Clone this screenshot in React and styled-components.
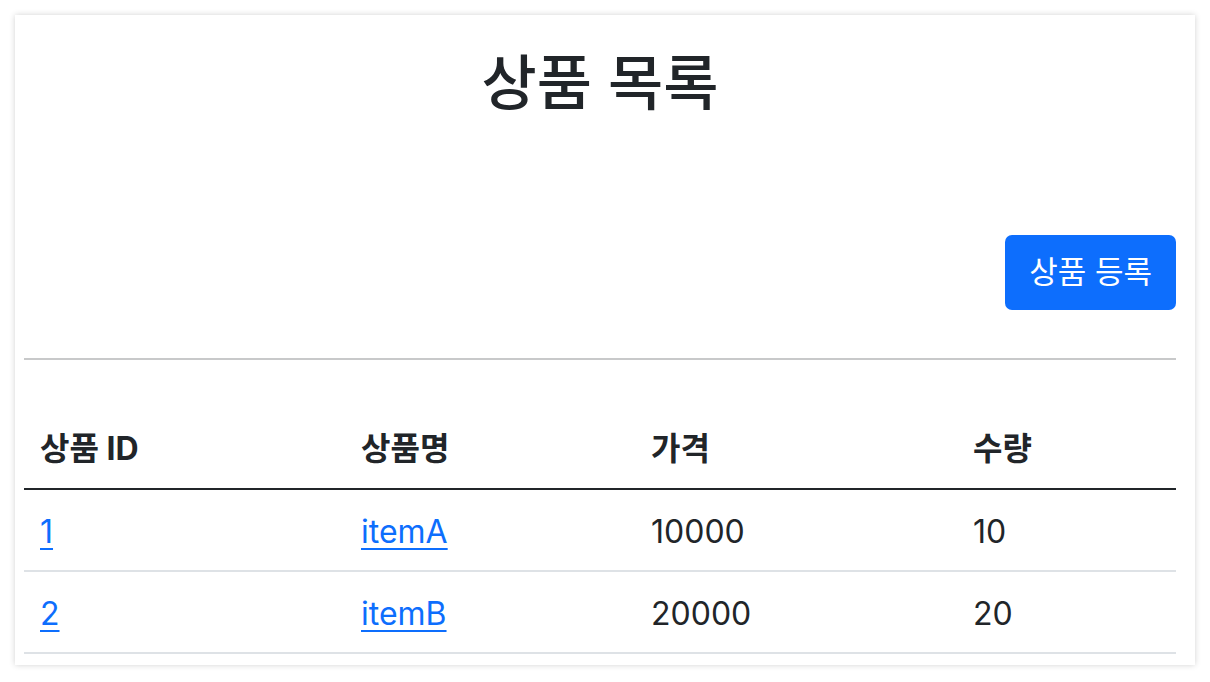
import React from 'react';
import styled, {createGlobalStyle} from "styled-components";

const GlobalStyle = createGlobalStyle`
  html, body {
    margin: 0;
    padding: 0;
    background: #ffffff;
  }
  body {
    font-family: Inter, "Noto Sans CJK KR", sans-serif;
    color: #212529;
  }
`

const items = [
    {id: 1, name: "itemA", price: 10000, quantity: 10},
    {id: 2, name: "itemB", price: 20000, quantity: 20},
];

const App = () => {
    return (
        <>
            <GlobalStyle/>
            <Card>
                <Title>상품 목록</Title>
                <Actions>
                    <PrimaryButton type="button">상품 등록</PrimaryButton>
                </Actions>
                <Divider/>
                <Table>
                    <thead>
                    <tr>
                        <Th width={321}>상품 ID</Th>
                        <Th width={290}>상품명</Th>
                        <Th width={322}>가격</Th>
                        <Th>수량</Th>
                    </tr>
                    </thead>
                    <tbody>
                    {items.map(item => (
                        <tr key={item.id}>
                            <Td><ItemLink href="#">{item.id}</ItemLink></Td>
                            <Td><ItemLink href="#">{item.name}</ItemLink></Td>
                            <Td>{item.price}</Td>
                            <Td>{item.quantity}</Td>
                        </tr>
                    ))}
                    </tbody>
                </Table>
            </Card>
        </>
    );
};

const Card = styled.div`
  margin: 15px;
  padding: 32px 19px 11px 9px;
  background: #fff;
  box-shadow: 0 0 6px rgba(0, 0, 0, 0.18);
`

const Title = styled.h2`
  margin: 0;
  font-size: 60px;
  line-height: 72px;
  font-weight: 500;
  text-align: center;
`

const Actions = styled.div`
  display: flex;
  justify-content: flex-end;
  margin-top: 116px;
`

const PrimaryButton = styled.button`
  font-family: inherit;
  font-size: 31px;
  line-height: 48px;
  padding: 13px 24px 14px;
  color: #fff;
  background-color: #0d6efd;
  border: none;
  border-radius: 7px;
  cursor: pointer;
`

const Divider = styled.hr`
  margin: 48px 0;
  border: 0;
  border-top: 2px solid #c8c9ca;
`

const Table = styled.table`
  width: 100%;
  border-collapse: collapse;
  font-size: 32px;
  line-height: 48px;
`

const Th = styled.th`
  box-sizing: border-box;
  width: ${props => props.width ? props.width + 'px' : 'auto'};
  padding: 17px 16px 15px;
  text-align: left;
  font-weight: 700;
  border-bottom: 2px solid #212529;
`

const Td = styled.td`
  padding: 18px 16px 14px;
  border-bottom: 2px solid #dee2e6;
`

const ItemLink = styled.a`
  color: #0d6efd;
  text-decoration: underline;
  text-underline-offset: 5px;
  text-decoration-thickness: 2px;
`

export default App;
